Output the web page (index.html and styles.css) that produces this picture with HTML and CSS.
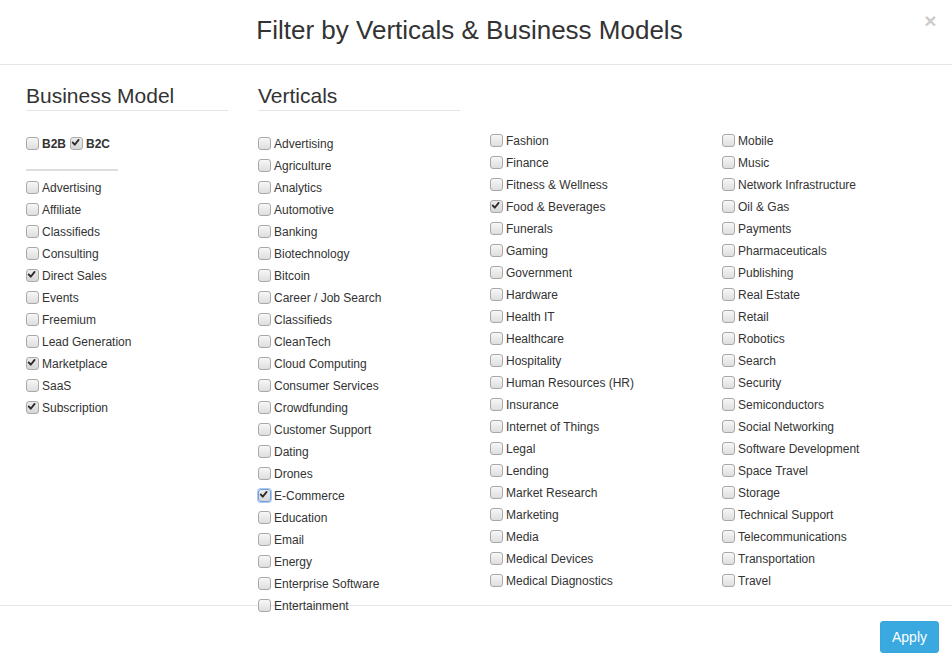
FILE: index.html
```html
<!DOCTYPE html>
<html>
<head>
<meta charset="utf-8">
<title>Filter by Verticals &amp; Business Models</title>
<link rel="stylesheet" href="styles.css">
</head>
<body>
<div class="modal">
  <header class="modal-header">
    <h4 class="modal-title">Filter by Verticals &amp; Business Models</h4>
    <button class="close" type="button">&times;</button>
  </header>
  <div class="modal-body">
    <div class="col">
      <h3 class="section-title">Business Model</h3>
      <div class="inline-row">
        <label class="item bold"><span class="cb"></span>B2B</label>
        <label class="item bold spaced"><span class="cb checked"><svg viewBox="0 0 13 13"><path d="M3 6.2 L5.4 9 L10 3.2"/></svg></span>B2C</label>
      </div>
      <div class="sep"></div>
      <ul class="list">
        <li class="item"><span class="cb"></span>Advertising</li>
        <li class="item"><span class="cb"></span>Affiliate</li>
        <li class="item"><span class="cb"></span>Classifieds</li>
        <li class="item"><span class="cb"></span>Consulting</li>
        <li class="item"><span class="cb checked"><svg viewBox="0 0 13 13"><path d="M3 6.2 L5.4 9 L10 3.2"/></svg></span>Direct Sales</li>
        <li class="item"><span class="cb"></span>Events</li>
        <li class="item"><span class="cb"></span>Freemium</li>
        <li class="item"><span class="cb"></span>Lead Generation</li>
        <li class="item"><span class="cb checked"><svg viewBox="0 0 13 13"><path d="M3 6.2 L5.4 9 L10 3.2"/></svg></span>Marketplace</li>
        <li class="item"><span class="cb"></span>SaaS</li>
        <li class="item"><span class="cb checked"><svg viewBox="0 0 13 13"><path d="M3 6.2 L5.4 9 L10 3.2"/></svg></span>Subscription</li>
      </ul>
    </div>
    <div class="col">
      <h3 class="section-title">Verticals</h3>
      <ul class="list">
        <li class="item"><span class="cb"></span>Advertising</li>
        <li class="item"><span class="cb"></span>Agriculture</li>
        <li class="item"><span class="cb"></span>Analytics</li>
        <li class="item"><span class="cb"></span>Automotive</li>
        <li class="item"><span class="cb"></span>Banking</li>
        <li class="item"><span class="cb"></span>Biotechnology</li>
        <li class="item"><span class="cb"></span>Bitcoin</li>
        <li class="item"><span class="cb"></span>Career / Job Search</li>
        <li class="item"><span class="cb"></span>Classifieds</li>
        <li class="item"><span class="cb"></span>CleanTech</li>
        <li class="item"><span class="cb"></span>Cloud Computing</li>
        <li class="item"><span class="cb"></span>Consumer Services</li>
        <li class="item"><span class="cb"></span>Crowdfunding</li>
        <li class="item"><span class="cb"></span>Customer Support</li>
        <li class="item"><span class="cb"></span>Dating</li>
        <li class="item"><span class="cb"></span>Drones</li>
        <li class="item"><span class="cb checked focus"><svg viewBox="0 0 13 13"><path d="M3 6.2 L5.4 9 L10 3.2"/></svg></span>E-Commerce</li>
        <li class="item"><span class="cb"></span>Education</li>
        <li class="item"><span class="cb"></span>Email</li>
        <li class="item"><span class="cb"></span>Energy</li>
        <li class="item"><span class="cb"></span>Enterprise Software</li>
        <li class="item"><span class="cb"></span>Entertainment</li>
      </ul>
    </div>
    <div class="col col-nohead">
      <ul class="list">
        <li class="item"><span class="cb"></span>Fashion</li>
        <li class="item"><span class="cb"></span>Finance</li>
        <li class="item"><span class="cb"></span>Fitness &amp; Wellness</li>
        <li class="item"><span class="cb checked"><svg viewBox="0 0 13 13"><path d="M3 6.2 L5.4 9 L10 3.2"/></svg></span>Food &amp; Beverages</li>
        <li class="item"><span class="cb"></span>Funerals</li>
        <li class="item"><span class="cb"></span>Gaming</li>
        <li class="item"><span class="cb"></span>Government</li>
        <li class="item"><span class="cb"></span>Hardware</li>
        <li class="item"><span class="cb"></span>Health IT</li>
        <li class="item"><span class="cb"></span>Healthcare</li>
        <li class="item"><span class="cb"></span>Hospitality</li>
        <li class="item"><span class="cb"></span>Human Resources (HR)</li>
        <li class="item"><span class="cb"></span>Insurance</li>
        <li class="item"><span class="cb"></span>Internet of Things</li>
        <li class="item"><span class="cb"></span>Legal</li>
        <li class="item"><span class="cb"></span>Lending</li>
        <li class="item"><span class="cb"></span>Market Research</li>
        <li class="item"><span class="cb"></span>Marketing</li>
        <li class="item"><span class="cb"></span>Media</li>
        <li class="item"><span class="cb"></span>Medical Devices</li>
        <li class="item"><span class="cb"></span>Medical Diagnostics</li>
      </ul>
    </div>
    <div class="col col-nohead">
      <ul class="list">
        <li class="item"><span class="cb"></span>Mobile</li>
        <li class="item"><span class="cb"></span>Music</li>
        <li class="item"><span class="cb"></span>Network Infrastructure</li>
        <li class="item"><span class="cb"></span>Oil &amp; Gas</li>
        <li class="item"><span class="cb"></span>Payments</li>
        <li class="item"><span class="cb"></span>Pharmaceuticals</li>
        <li class="item"><span class="cb"></span>Publishing</li>
        <li class="item"><span class="cb"></span>Real Estate</li>
        <li class="item"><span class="cb"></span>Retail</li>
        <li class="item"><span class="cb"></span>Robotics</li>
        <li class="item"><span class="cb"></span>Search</li>
        <li class="item"><span class="cb"></span>Security</li>
        <li class="item"><span class="cb"></span>Semiconductors</li>
        <li class="item"><span class="cb"></span>Social Networking</li>
        <li class="item"><span class="cb"></span>Software Development</li>
        <li class="item"><span class="cb"></span>Space Travel</li>
        <li class="item"><span class="cb"></span>Storage</li>
        <li class="item"><span class="cb"></span>Technical Support</li>
        <li class="item"><span class="cb"></span>Telecommunications</li>
        <li class="item"><span class="cb"></span>Transportation</li>
        <li class="item"><span class="cb"></span>Travel</li>
      </ul>
    </div>
  </div>
  <footer class="modal-footer">
    <button class="btn-apply" type="button">Apply</button>
  </footer>
</div>
</body>
</html>
```

FILE: styles.css
```css
* { box-sizing: border-box; }

html, body {
  margin: 0;
  padding: 0;
  background: #fff;
}

body {
  font-family: "Liberation Sans", Arial, Helvetica, sans-serif;
  color: #333;
}

.modal {
  width: 952px;
  height: 665px;
  background: #fff;
}

.modal-header {
  display: flex;
  height: 65px;
  padding: 15px 15px 0;
  border-bottom: 1px solid #e5e5e5;
}

.modal-title {
  flex: 1;
  margin: 0;
  font-size: 26px;
  line-height: 30px;
  font-weight: 400;
  text-align: center;
  color: #333;
}

.close {
  align-self: flex-start;
  margin-top: -5px;
  padding: 0;
  width: 13px;
  border: 0;
  background: transparent;
  font-family: "Liberation Sans", Arial, sans-serif;
  font-size: 21px;
  line-height: 21px;
  font-weight: 700;
  color: #000;
  opacity: 0.2;
  cursor: pointer;
}

.modal-body {
  display: grid;
  grid-template-columns: repeat(4, 232px);
  align-items: start;
  height: 540px;
  padding: 19px 0 0 26px;
}

.col-nohead {
  padding-top: 46px;
}

.section-title {
  width: 202px;
  margin: 0 0 22px;
  padding-bottom: 3px;
  font-size: 21px;
  line-height: 23px;
  font-weight: 400;
  color: #333;
  border-bottom: 1px solid #e5e5e5;
}

.list {
  list-style: none;
  margin: 0;
  padding: 0;
}

.inline-row {
  display: flex;
}

.item {
  display: flex;
  align-items: center;
  height: 22px;
  font-size: 12px;
  color: #333;
  white-space: nowrap;
}

.item.bold {
  font-weight: 700;
}

.item.spaced {
  margin-left: 4px;
}

.cb {
  flex: none;
  display: block;
  width: 13px;
  height: 13px;
  margin-right: 3px;
  border: 1px solid #a9a9a9;
  border-radius: 3px;
  background: linear-gradient(#f7f7f7, #dedede);
  position: relative;
  top: -1px;
}

.cb svg {
  display: block;
  width: 11px;
  height: 11px;
}

.cb svg path {
  fill: none;
  stroke: #2b2b2b;
  stroke-width: 2.2;
  stroke-linecap: round;
  stroke-linejoin: round;
  transform: translate(-1px, -1px);
}

.cb.checked {
  background: linear-gradient(#ececec, #d6d6d6);
}

.cb.focus {
  border-color: #6b9fe0;
  box-shadow: 0 0 0 1px #a9c8f3;
}

.sep {
  width: 92px;
  height: 2px;
  margin: 14px 0 6px;
  background: #ddd;
}

.modal-footer {
  display: flex;
  justify-content: flex-end;
  padding: 15px 13px 12px;
  border-top: 1px solid #e5e5e5;
}

.btn-apply {
  height: 32px;
  padding: 0 11px;
  border: 1px solid #36a6dc;
  border-radius: 3px;
  background: #3aa9e0;
  color: #fff;
  font-family: "Liberation Sans", Arial, sans-serif;
  font-size: 14px;
  line-height: 20px;
  cursor: pointer;
}
```
